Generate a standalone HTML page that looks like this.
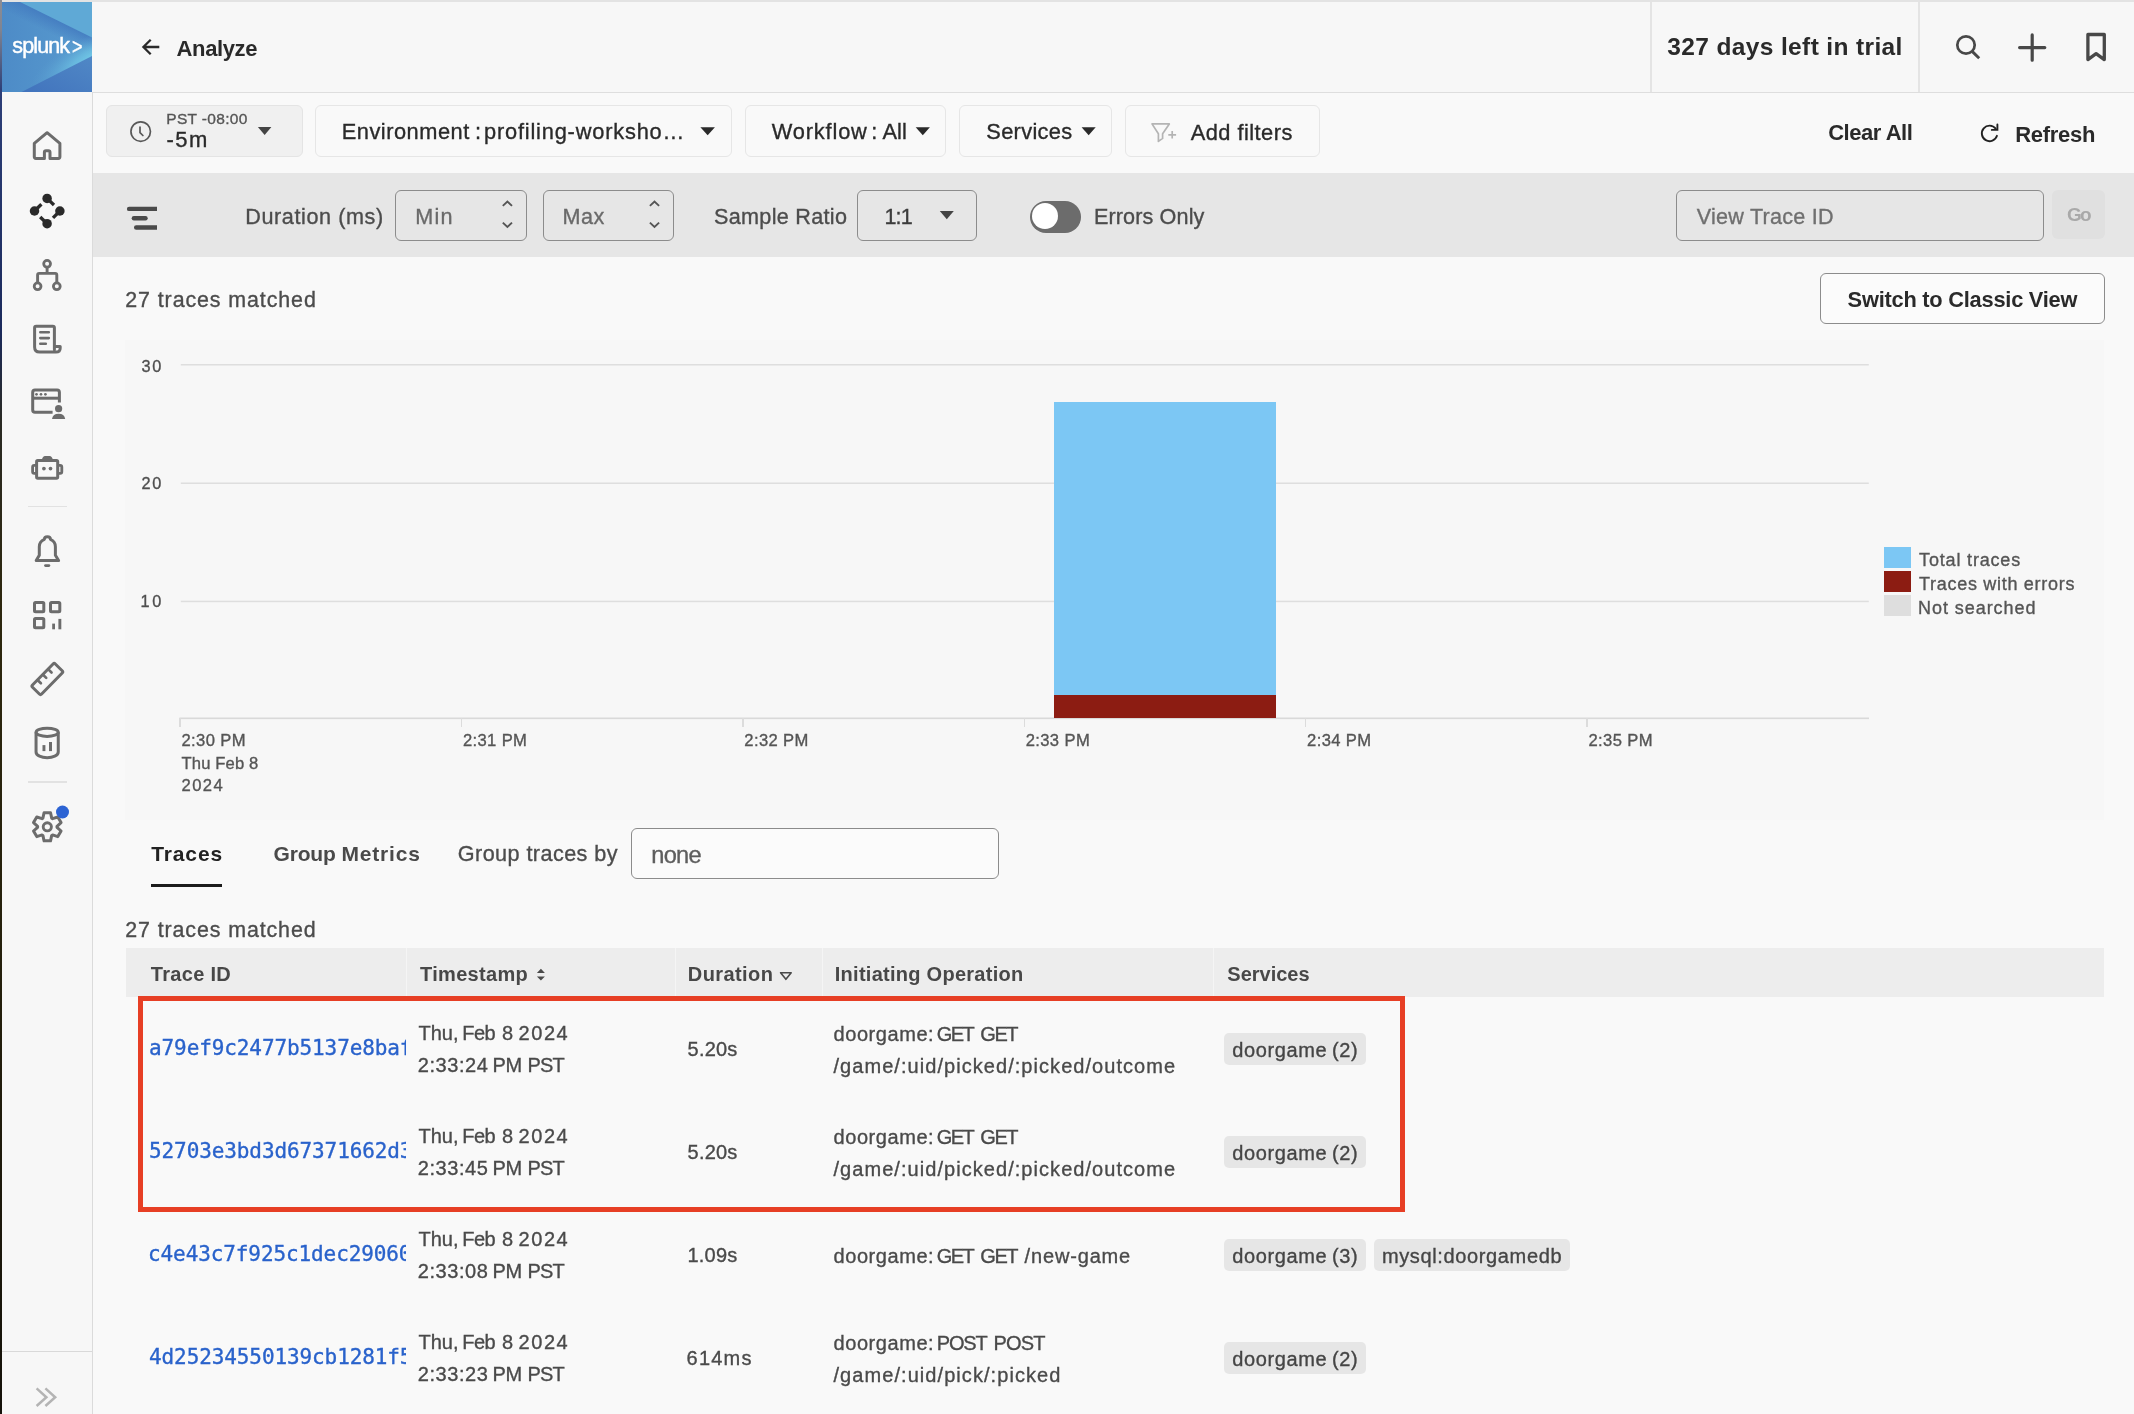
<!DOCTYPE html>
<html lang="en">
<head>
<meta charset="utf-8">
<title>Splunk Observability - Trace Analyzer</title>
<style>
html,body{margin:0;padding:0}
body{width:2134px;height:1414px;overflow:hidden;position:relative;background:#f9f9f9;font-family:"Liberation Sans",sans-serif;}
.a{position:absolute;box-sizing:border-box}
.t{position:absolute;white-space:nowrap;line-height:1;display:block}
.tag{position:absolute;background:#e6e6e6;border-radius:5px}
.btn{position:absolute;box-sizing:border-box;border:1.5px solid #e6e6e6;border-radius:6px;background:#f9f9f9}
.inp{position:absolute;box-sizing:border-box;border:1.5px solid #8c8c8c;border-radius:6px}
svg{position:absolute;overflow:visible}
</style>
</head>
<body>
<!-- window chrome strips -->
<div class="a" style="left:0;top:0;width:2134px;height:2px;background:#e3e3e3"></div>
<div class="a" style="left:0;top:0;width:2px;height:1414px;background:linear-gradient(#8c8d95 0px,#7f8492 30px,#2d3f78 90px,#1b2a5c 330px,#2a2a24 420px,#2e280f 600px,#241f0c 1000px,#15120a 1414px)"></div>

<!-- sidebar -->
<div class="a" style="left:2px;top:2px;width:90px;height:1412px;background:#f7f7f7"></div>
<div class="a" style="left:92px;top:92px;width:1px;height:1322px;background:#dbdbdb"></div>
<svg class="a" style="left:2px;top:2px" width="90" height="90" viewBox="0 0 90 90"><defs><linearGradient id="lg1" x1="0" y1="0" x2="1" y2="0"><stop offset="0" stop-color="#4d8bc7"/><stop offset="0.6" stop-color="#5495cc"/><stop offset="1" stop-color="#5a9ed1"/></linearGradient><linearGradient id="lg3" x1="0" y1="1" x2="1" y2="0"><stop offset="0" stop-color="#4173bd"/><stop offset="1" stop-color="#5088c6"/></linearGradient><radialGradient id="lg4" gradientUnits="userSpaceOnUse" cx="0" cy="0" r="70" gradientTransform="translate(92 55) rotate(-27) scale(1 0.32)"><stop offset="0" stop-color="#72cbe8" stop-opacity="1"/><stop offset="0.35" stop-color="#6cc0e2" stop-opacity="0.75"/><stop offset="1" stop-color="#5a9ed1" stop-opacity="0"/></radialGradient><linearGradient id="lg5" gradientUnits="userSpaceOnUse" x1="56" y1="18" x2="49" y2="32"><stop offset="0" stop-color="#4279bf" stop-opacity="0.85"/><stop offset="1" stop-color="#4279bf" stop-opacity="0"/></linearGradient></defs><rect width="90" height="90" fill="url(#lg1)"/><rect width="90" height="90" fill="url(#lg5)"/><rect width="90" height="90" fill="url(#lg4)"/><path d="M18 0 H90 V35.5 Z" fill="#5fa9d6"/><path d="M90 54 V90 H19.5 Z" fill="url(#lg3)"/></svg>
<svg class="a" style="left:0;top:0" width="2134" height="1414" viewBox="0 0 2134 1414" ><path fill="none" stroke="#6c6c6c" stroke-width="3" stroke-linejoin="round" stroke-linecap="round" d="M44.4 158.4 H36 Q34.3 158.4 34.3 156.8 V143.4 L47.1 132.7 L59.9 143.4 V156.8 Q59.9 158.4 58.3 158.4 H50 V152.4 Q50 150.8 48.4 150.8 H46 Q44.4 150.8 44.4 152.4 Z"/><circle cx="47.1" cy="198.4" r="4.75" fill="#2a2a2a"/><circle cx="34.5" cy="211" r="4.75" fill="#2a2a2a"/><circle cx="59.9" cy="211" r="4.75" fill="#2a2a2a"/><circle cx="47.1" cy="223.7" r="4.75" fill="#2a2a2a"/><line x1="47.1" y1="198.4" x2="54.0" y2="205.0" stroke="#2a2a2a" stroke-width="3.3"/><line x1="34.5" y1="211" x2="41.4" y2="204.3" stroke="#2a2a2a" stroke-width="3.3"/><line x1="59.9" y1="211" x2="53.0" y2="217.9" stroke="#2a2a2a" stroke-width="3.3"/><line x1="47.1" y1="223.7" x2="40.2" y2="217.0" stroke="#2a2a2a" stroke-width="3.3"/><circle cx="47.1" cy="263.8" r="3.4" fill="none" stroke="#6c6c6c" stroke-width="2.8"/><circle cx="37.6" cy="286.3" r="3.4" fill="none" stroke="#6c6c6c" stroke-width="2.8"/><circle cx="56.8" cy="286.3" r="3.4" fill="none" stroke="#6c6c6c" stroke-width="2.8"/><path fill="none" stroke="#6c6c6c" stroke-width="2.9" d="M47.1 267.5 V273.4 M37.6 282.6 V275 Q37.6 273.4 39.2 273.4 H55.2 Q56.8 273.4 56.8 275 V282.6"/><path fill="none" stroke="#6c6c6c" stroke-width="3" stroke-linejoin="round" stroke-linecap="round" d="M54.4 346.4 V327.8 Q54.4 326.2 52.8 326.2 H36.2 Q34.6 326.2 34.6 327.8 V347 Q34.6 352.1 39.7 352.1 H56 Q60.2 352.1 60.2 347.9 V346.4 H54.4 V349.5"/><path fill="none" stroke="#6c6c6c" stroke-width="2.6" stroke-linecap="round" d="M40.3 332.3 H48.8 M40.3 338.1 H48.8 M40.3 343.8 H45.8"/><path fill="none" stroke="#6c6c6c" stroke-width="3" stroke-linejoin="round" d="M59.4 402.6 V392.4 Q59.4 390.1 57.1 390.1 H35 Q32.7 390.1 32.7 392.4 V410 Q32.7 412.3 35 412.3 H52.6"/><path fill="none" stroke="#6c6c6c" stroke-width="3" d="M32.7 398.2 H59.4"/><circle cx="36.5" cy="394.3" r="1.35" fill="#6c6c6c"/><circle cx="41" cy="394.3" r="1.35" fill="#6c6c6c"/><circle cx="45.4" cy="394.3" r="1.35" fill="#6c6c6c"/><circle cx="58.6" cy="408.7" r="3.6" fill="#6c6c6c"/><path fill="#6c6c6c" d="M52 419.1 Q52.8 413.8 58.6 413.8 Q64.4 413.8 65.2 419.1 Z"/><rect x="36.6" y="460.5" width="21.1" height="17.8" rx="1.2" fill="none" stroke="#6c6c6c" stroke-width="3" stroke-linejoin="round" stroke-linecap="round"/><path fill="#6c6c6c" d="M41.9 459.5 Q42.8 455.9 45 455.9 H49.7 Q51.9 455.9 52.8 459.5 Z"/><path fill="none" stroke="#6c6c6c" stroke-width="2.8" stroke-linejoin="round" d="M36 465.4 H34.2 Q32.6 465.4 32.6 467 V471.7 Q32.6 473.3 34.2 473.3 H36 M58.3 465.4 H60.2 Q61.8 465.4 61.8 467 V471.7 Q61.8 473.3 60.2 473.3 H58.3"/><circle cx="43.9" cy="468.6" r="1.85" fill="#6c6c6c"/><circle cx="50.5" cy="468.6" r="1.85" fill="#6c6c6c"/><path fill="none" stroke="#6c6c6c" stroke-width="3" stroke-linejoin="round" stroke-linecap="round" d="M36.2 560.6 L39.3 555.2 V546.8 C39.3 542.2 42.6 540 44.4 539.3 C44.4 537.6 45.7 536.8 47.4 536.8 C49.1 536.8 50.4 537.6 50.4 539.3 C52.2 540 55.4 542.2 55.4 546.8 V555.2 L58.6 560.6 Z"/><path stroke="#6c6c6c" stroke-width="2.8" stroke-linecap="round" d="M45.5 565.6 H48.9"/><rect x="34.5" y="602.4" width="9.3" height="9.3" rx="1" fill="none" stroke="#6c6c6c" stroke-width="3" stroke-linejoin="round" stroke-linecap="round"/><rect x="50.5" y="602.4" width="9.3" height="9.3" rx="1" fill="none" stroke="#6c6c6c" stroke-width="3" stroke-linejoin="round" stroke-linecap="round"/><rect x="34.5" y="618.5" width="9.3" height="9.3" rx="1" fill="none" stroke="#6c6c6c" stroke-width="3" stroke-linejoin="round" stroke-linecap="round"/><rect x="52.2" y="623.6" width="2.8" height="5.7" fill="#6c6c6c"/><rect x="58.4" y="618.9" width="2.9" height="10.4" fill="#6c6c6c"/><g transform="translate(47.35 679) rotate(-45.6)"><rect x="-16.3" y="-6.4" width="32.6" height="12.8" rx="1.6" fill="none" stroke="#6c6c6c" stroke-width="3" stroke-linejoin="round" stroke-linecap="round"/><path stroke="#6c6c6c" stroke-width="2.7" stroke-linecap="round" d="M-7.6 -6 V-1.6 M0 -6 V-1.6 M7.6 -6 V-1.6"/></g><ellipse cx="47.15" cy="732.3" rx="11.1" ry="4.1" fill="none" stroke="#6c6c6c" stroke-width="3"/><path fill="none" stroke="#6c6c6c" stroke-width="3" d="M36.05 732.3 V752 C36.05 759.5 58.25 759.5 58.25 752 V732.3"/><rect x="42.5" y="745.1" width="2.9" height="6" fill="#6c6c6c"/><rect x="49" y="742" width="3" height="9.1" fill="#6c6c6c"/><path d="M51.70 818.16 L50.54 812.77 L44.06 812.77 L42.90 818.16 L42.02 818.66 L36.77 816.98 L33.53 822.59 L37.61 826.29 L37.61 827.31 L33.53 831.01 L36.77 836.62 L42.02 834.94 L42.90 835.44 L44.06 840.83 L50.54 840.83 L51.70 835.44 L52.58 834.94 L57.83 836.62 L61.07 831.01 L56.99 827.31 L56.99 826.29 L61.07 822.59 L57.83 816.98 L52.58 818.66 Z" fill="none" stroke="#6c6c6c" stroke-width="3" stroke-linejoin="round"/><circle cx="47.3" cy="826.8" r="4.1" fill="none" stroke="#6c6c6c" stroke-width="2.9"/><circle cx="62.5" cy="812" r="6.5" fill="#2c63d3"/><path fill="none" stroke="#b4b4b4" stroke-width="2.5" d="M36.6 1388.4 L46.4 1397.2 L36.6 1406 M45.4 1388.4 L55.2 1397.2 L45.4 1406"/></svg>
<div class="a" style="left:28px;top:505.5px;width:39px;height:1.5px;background:#e2e2e2"></div>
<div class="a" style="left:28px;top:781px;width:39px;height:1.5px;background:#e2e2e2"></div>
<div class="a" style="left:2px;top:1350.5px;width:90px;height:1.5px;background:#d9d9d9"></div>

<!-- header -->
<div class="a" style="left:92px;top:2px;width:2042px;height:90px;background:#f7f7f7"></div>
<div class="a" style="left:93px;top:92px;width:2041px;height:1px;background:#dedede"></div>
<div class="a" style="left:1650px;top:2px;width:1.5px;height:90px;background:#e4e4e4"></div>
<div class="a" style="left:1918px;top:2px;width:1.5px;height:90px;background:#e4e4e4"></div>
<svg class="a" style="left:0;top:0" width="2134" height="1414" viewBox="0 0 2134 1414" ><path fill="none" stroke="#2a2a2a" stroke-width="2.3" d="M159.3 47 H143.6 M150.7 39.7 L143.4 47 L150.7 54.3"/><circle cx="1966" cy="45" r="8.7" fill="none" stroke="#484848" stroke-width="2.7"/><path stroke="#484848" stroke-width="2.9" d="M1972.4 51.6 L1979.2 58.3"/><path stroke="#484848" stroke-width="3.2" stroke-linecap="round" d="M2019.6 47.6 H2044.8 M2032.2 34.9 V60.2"/><path fill="none" stroke="#484848" stroke-width="3.3" stroke-linejoin="round" d="M2087.9 34.5 H2104.3 V59.6 L2096.1 53.6 L2087.9 59.6 Z"/></svg>

<!-- filter row -->
<div class="btn" style="left:106px;top:105px;width:197px;height:52px;background:#f0f0f0;border-color:#e4e4e4"></div>
<div class="btn" style="left:315px;top:105px;width:417px;height:52px"></div>
<div class="btn" style="left:745px;top:105px;width:201px;height:52px"></div>
<div class="btn" style="left:959px;top:105px;width:153px;height:52px"></div>
<div class="btn" style="left:1125px;top:105px;width:195px;height:52px"></div>
<svg class="a" style="left:0;top:0" width="2134" height="1414" viewBox="0 0 2134 1414" ><circle cx="140.7" cy="131.6" r="9.75" fill="none" stroke="#585858" stroke-width="1.7"/><path fill="none" stroke="#585858" stroke-width="1.7" stroke-linecap="round" d="M140 127 V132.6 L142.9 135.5"/><path fill="#444" d="M257.9 127.1 H271.4 L264.65 135.1 Z"/><path fill="#2a2a2a" d="M700.4 127.3 H714.9 L707.65 135.3 Z"/><path fill="#2a2a2a" d="M915.7 127.3 H929.9 L922.8 135.3 Z"/><path fill="#2a2a2a" d="M1081.6 127.3 H1095.7 L1088.65 135.3 Z"/><path fill="none" stroke="#b4b4b4" stroke-width="1.7" stroke-linejoin="round" d="M1152 123.9 H1169.3 L1162.6 133.8 V138.4 L1158.4 141.4 V133.8 Z"/><path stroke="#b4b4b4" stroke-width="1.7" d="M1168.3 134.8 H1176.1 M1172.2 131 V138.6"/><path fill="none" stroke="#222" stroke-width="1.9" stroke-linecap="round" d="M1995.71 128.63 A7.75 7.75 0 1 0 1996.97 135.79"/><path fill="none" stroke="#222" stroke-width="1.9" stroke-linecap="round" stroke-linejoin="miter" d="M1997.4 124.4 V129.9 H1991.8"/></svg>

<!-- toolbar -->
<div class="a" style="left:93px;top:173px;width:2041px;height:83.5px;background:#e6e6e6"></div>
<div class="inp" style="left:395px;top:190px;width:132px;height:50.5px"></div>
<div class="inp" style="left:543px;top:190px;width:130.5px;height:50.5px"></div>
<div class="inp" style="left:857px;top:190px;width:120px;height:50.5px"></div>
<div class="a" style="left:1030px;top:201px;width:51px;height:32px;border-radius:16px;background:#6c6c6c"></div>
<div class="a" style="left:1031.8px;top:202.8px;width:26.4px;height:26.4px;border-radius:50%;background:#fff"></div>
<div class="inp" style="left:1676px;top:190px;width:368px;height:50.5px"></div>
<div class="a" style="left:2052px;top:190px;width:53px;height:49px;border-radius:6px;background:#e0e0e0"></div>
<svg class="a" style="left:0;top:0" width="2134" height="1414" viewBox="0 0 2134 1414" ><path fill="#4a4a4a" d="M129.1 206.7 H157 V211.1 H129.1 A2.2 2.2 0 0 1 129.1 206.7 Z"/><rect x="131.7" y="216.1" width="16" height="4.4" rx="2.2" fill="#4a4a4a"/><path fill="#4a4a4a" d="M136.2 225.3 H157 V229.8 H136.2 A2.25 2.25 0 0 1 136.2 225.3 Z"/><path fill="none" stroke="#555" stroke-width="1.9" d="M502.79999999999995 205.9 L507.4 201.6 L512.0 205.9 M502.79999999999995 222.6 L507.4 226.9 L512.0 222.6"/><path fill="none" stroke="#555" stroke-width="1.9" d="M649.9 205.9 L654.5 201.6 L659.1 205.9 M649.9 222.6 L654.5 226.9 L659.1 222.6"/><path fill="#444" d="M939.8 211.1 H953.8 L946.8 219.2 Z"/></svg>

<!-- classic view -->
<div class="inp" style="left:1820px;top:273px;width:285px;height:51px;background:#fbfbfb"></div>

<!-- chart -->
<div class="a" style="left:125px;top:339.5px;width:1979px;height:480px;background:#f7f7f7"></div>
<svg class="a" style="left:0;top:0" width="2134" height="1414" viewBox="0 0 2134 1414"><rect x="180.8" y="364" width="1688" height="1.5" fill="#dedede"/><rect x="180.8" y="482.5" width="1688" height="1.5" fill="#dedede"/><rect x="180.8" y="600.7" width="1688" height="1.5" fill="#dedede"/><rect x="179.4" y="717.5" width="1689.6" height="1.6" fill="#d9d9d9"/></svg>
<div class="a" style="left:1054px;top:401.5px;width:222px;height:293.5px;background:#7cc7f4"></div>
<div class="a" style="left:1054px;top:694.7px;width:222px;height:23px;background:#8c1c12"></div>
<div class="a" style="left:179.3px;top:718px;width:1.6px;height:8.6px;background:#dcdcdc"></div><div class="a" style="left:460.7px;top:718px;width:1.6px;height:8.6px;background:#dcdcdc"></div><div class="a" style="left:742.1px;top:718px;width:1.6px;height:8.6px;background:#dcdcdc"></div><div class="a" style="left:1023.5px;top:718px;width:1.6px;height:8.6px;background:#dcdcdc"></div><div class="a" style="left:1304.9px;top:718px;width:1.6px;height:8.6px;background:#dcdcdc"></div><div class="a" style="left:1586.3px;top:718px;width:1.6px;height:8.6px;background:#dcdcdc"></div>
<div class="a" style="left:1884px;top:547px;width:27.4px;height:21px;background:#7cc7f4"></div>
<div class="a" style="left:1884px;top:571px;width:27.4px;height:21px;background:#8c1c12"></div>
<div class="a" style="left:1884px;top:595px;width:27.4px;height:21px;background:#dedede"></div>

<!-- tabs -->
<div class="a" style="left:151px;top:883.5px;width:71px;height:3px;background:#1c1c1c"></div>
<div class="inp" style="left:631px;top:828px;width:368px;height:50.5px;background:#fbfbfb"></div>

<!-- table -->
<div class="a" style="left:126px;top:947.7px;width:1978px;height:49.5px;background:#ededed"></div>
<div class="a" style="left:405.5px;top:948px;width:1.6px;height:49px;background:#f5f5f5"></div>
<div class="a" style="left:674.5px;top:948px;width:1.6px;height:49px;background:#f5f5f5"></div>
<div class="a" style="left:821.5px;top:948px;width:1.6px;height:49px;background:#f5f5f5"></div>
<div class="a" style="left:1212.5px;top:948px;width:1.6px;height:49px;background:#f5f5f5"></div>
<svg class="a" style="left:0;top:0" width="2134" height="1414" viewBox="0 0 2134 1414" ><path fill="#4a4a4a" d="M536.9 972.9 L540.9 968.7 L544.9 972.9 Z M536.9 976.4 L540.9 980.6 L544.9 976.4 Z"/><path fill="none" stroke="#4a4a4a" stroke-width="1.6" stroke-linejoin="round" d="M780.6 972.7 H791.2 L785.9 979.3 Z"/></svg>
<div class="tag" style="left:1224.0px;top:1032.9px;width:141.9px;height:31.9px"></div>
<div class="tag" style="left:1224.0px;top:1135.9px;width:141.9px;height:31.9px"></div>
<div class="tag" style="left:1224.0px;top:1238.9px;width:141.9px;height:31.9px"></div>
<div class="tag" style="left:1374.0px;top:1238.9px;width:195.9px;height:31.9px"></div>
<div class="tag" style="left:1224.0px;top:1341.9px;width:141.9px;height:31.9px"></div>
<!-- highlight -->
<div class="a" style="left:137.6px;top:996.4px;width:1267.8px;height:215.2px;border:5.2px solid #e73f25"></div>

<div class="a" style="left:0;top:0;width:2134px;height:1414px;will-change:transform">
<span class="t" style='left:12.30px;top:36px;font-size:21.5px;font-weight:400;color:#ffffff;letter-spacing:-0.880px;-webkit-text-stroke:0.45px #fff;'>splunk</span>
<span class="t" style='left:72.00px;top:36px;font-size:22.5px;font-weight:400;color:#ffffff;letter-spacing:-3.000px;transform:scaleX(0.8);transform-origin:0 0;-webkit-text-stroke:0.4px #fff;'>&gt;</span>
<span class="t" style='left:176.60px;top:38px;font-size:22px;font-weight:700;color:#2a2a2a;letter-spacing:-0.385px;'>Analyze</span>
<span class="t" style='left:1667.30px;top:35px;font-size:24.5px;font-weight:700;color:#2a2a2a;letter-spacing:0.367px;'>327 days left in trial</span>
<span class="t" style='left:166.30px;top:111px;font-size:15.5px;font-weight:400;color:#555;letter-spacing:0.324px;-webkit-text-stroke:0.35px #555;'>PST -08:00</span>
<span class="t" style='left:166.50px;top:129px;font-size:22px;font-weight:400;color:#2a2a2a;letter-spacing:1.469px;-webkit-text-stroke:0.35px #2a2a2a;'>-5m</span>
<span class="t" style='left:341.70px;top:121px;font-size:21.8px;font-weight:400;color:#2a2a2a;letter-spacing:0.519px;-webkit-text-stroke:0.35px #2a2a2a;'>Environment </span>
<span class="t" style='left:474.90px;top:121px;font-size:21.8px;font-weight:400;color:#2a2a2a;letter-spacing:-0.900px;-webkit-text-stroke:0.35px #2a2a2a;'>: </span>
<span class="t" style='left:484.00px;top:121px;font-size:21.8px;font-weight:400;color:#2a2a2a;letter-spacing:0.809px;-webkit-text-stroke:0.35px #2a2a2a;'>profiling-worksho…</span>
<span class="t" style='left:771.80px;top:121px;font-size:21.8px;font-weight:400;color:#2a2a2a;letter-spacing:0.832px;-webkit-text-stroke:0.35px #2a2a2a;'>Workflow </span>
<span class="t" style='left:871.30px;top:121px;font-size:21.8px;font-weight:400;color:#2a2a2a;letter-spacing:-0.900px;-webkit-text-stroke:0.35px #2a2a2a;'>: </span>
<span class="t" style='left:882.50px;top:121px;font-size:21.8px;font-weight:400;color:#2a2a2a;letter-spacing:0.010px;-webkit-text-stroke:0.35px #2a2a2a;'>All</span>
<span class="t" style='left:986.30px;top:121px;font-size:21.8px;font-weight:400;color:#2a2a2a;letter-spacing:0.331px;-webkit-text-stroke:0.35px #2a2a2a;'>Services</span>
<span class="t" style='left:1190.70px;top:122px;font-size:21.8px;font-weight:400;color:#2a2a2a;letter-spacing:0.468px;-webkit-text-stroke:0.35px #2a2a2a;'>Add filters</span>
<span class="t" style='left:1828.20px;top:122px;font-size:22px;font-weight:700;color:#2a2a2a;letter-spacing:-0.481px;'>Clear All</span>
<span class="t" style='left:2015.20px;top:124px;font-size:22px;font-weight:700;color:#2a2a2a;letter-spacing:-0.297px;'>Refresh</span>
<span class="t" style='left:245.20px;top:206px;font-size:21.6px;font-weight:400;color:#4c4c4c;letter-spacing:0.600px;-webkit-text-stroke:0.35px #4c4c4c;'>Duration (ms)</span>
<span class="t" style='left:415.30px;top:206px;font-size:21.6px;font-weight:400;color:#6a6a6a;letter-spacing:1.207px;-webkit-text-stroke:0.35px #6a6a6a;'>Min</span>
<span class="t" style='left:562.60px;top:206px;font-size:21.6px;font-weight:400;color:#6a6a6a;letter-spacing:0.501px;-webkit-text-stroke:0.35px #6a6a6a;'>Max</span>
<span class="t" style='left:714.10px;top:206px;font-size:21.6px;font-weight:400;color:#4c4c4c;letter-spacing:0.289px;-webkit-text-stroke:0.35px #4c4c4c;'>Sample Ratio</span>
<span class="t" style='left:884.50px;top:206px;font-size:21.6px;font-weight:400;color:#3c3c3c;letter-spacing:-0.904px;-webkit-text-stroke:0.35px #3c3c3c;'>1:1</span>
<span class="t" style='left:1093.90px;top:206px;font-size:21.6px;font-weight:400;color:#4c4c4c;letter-spacing:0.132px;-webkit-text-stroke:0.35px #4c4c4c;'>Errors Only</span>
<span class="t" style='left:1696.70px;top:206px;font-size:21.6px;font-weight:400;color:#6f6f6f;letter-spacing:0.233px;-webkit-text-stroke:0.35px #6f6f6f;'>View Trace ID</span>
<span class="t" style='left:2067.00px;top:205px;font-size:19px;font-weight:700;color:#a9a9a9;letter-spacing:-1.779px;'>Go</span>
<span class="t" style='left:125.30px;top:290px;font-size:21.4px;font-weight:400;color:#4c4c4c;letter-spacing:0.908px;-webkit-text-stroke:0.35px #4c4c4c;'>27 traces matched</span>
<span class="t" style='left:1847.60px;top:289px;font-size:21.8px;font-weight:700;color:#2a2a2a;letter-spacing:-0.226px;'>Switch to Classic View</span>
<span class="t" style='left:141.50px;top:358px;font-size:16.3px;font-weight:400;color:#4f4f4f;letter-spacing:1.645px;-webkit-text-stroke:0.35px #4f4f4f;'>30</span>
<span class="t" style='left:141.50px;top:475px;font-size:16.3px;font-weight:400;color:#4f4f4f;letter-spacing:1.645px;-webkit-text-stroke:0.35px #4f4f4f;'>20</span>
<span class="t" style='left:140.50px;top:593px;font-size:16.3px;font-weight:400;color:#4f4f4f;letter-spacing:2.645px;-webkit-text-stroke:0.35px #4f4f4f;'>10</span>
<span class="t" style='left:181.50px;top:733px;font-size:16.6px;font-weight:400;color:#555;letter-spacing:0.371px;-webkit-text-stroke:0.35px #555;'>2:30 PM</span>
<span class="t" style='left:462.90px;top:733px;font-size:16.6px;font-weight:400;color:#555;letter-spacing:0.371px;-webkit-text-stroke:0.35px #555;'>2:31 PM</span>
<span class="t" style='left:744.30px;top:733px;font-size:16.6px;font-weight:400;color:#555;letter-spacing:0.371px;-webkit-text-stroke:0.35px #555;'>2:32 PM</span>
<span class="t" style='left:1025.70px;top:733px;font-size:16.6px;font-weight:400;color:#555;letter-spacing:0.371px;-webkit-text-stroke:0.35px #555;'>2:33 PM</span>
<span class="t" style='left:1307.10px;top:733px;font-size:16.6px;font-weight:400;color:#555;letter-spacing:0.371px;-webkit-text-stroke:0.35px #555;'>2:34 PM</span>
<span class="t" style='left:1588.50px;top:733px;font-size:16.6px;font-weight:400;color:#555;letter-spacing:0.371px;-webkit-text-stroke:0.35px #555;'>2:35 PM</span>
<span class="t" style='left:181.60px;top:756px;font-size:16.6px;font-weight:400;color:#555;letter-spacing:0.137px;-webkit-text-stroke:0.35px #555;'>Thu Feb 8</span>
<span class="t" style='left:181.60px;top:778px;font-size:16.6px;font-weight:400;color:#555;letter-spacing:1.405px;-webkit-text-stroke:0.35px #555;'>2024</span>
<span class="t" style='left:1919.10px;top:551px;font-size:18px;font-weight:400;color:#555;letter-spacing:0.824px;-webkit-text-stroke:0.35px #555;'>Total traces</span>
<span class="t" style='left:1919.10px;top:575px;font-size:18px;font-weight:400;color:#555;letter-spacing:0.702px;-webkit-text-stroke:0.35px #555;'>Traces with errors</span>
<span class="t" style='left:1918.10px;top:599px;font-size:18px;font-weight:400;color:#555;letter-spacing:0.932px;-webkit-text-stroke:0.35px #555;'>Not searched</span>
<span class="t" style='left:151.20px;top:843px;font-size:21px;font-weight:700;color:#222;letter-spacing:0.884px;'>Traces</span>
<span class="t" style='left:273.60px;top:843px;font-size:21px;font-weight:700;color:#4a4a4a;letter-spacing:-0.216px;'>Group </span>
<span class="t" style='left:341.40px;top:843px;font-size:21px;font-weight:700;color:#4a4a4a;letter-spacing:0.841px;'>Metrics</span>
<span class="t" style='left:457.80px;top:843px;font-size:21.6px;font-weight:400;color:#4c4c4c;letter-spacing:0.434px;-webkit-text-stroke:0.35px #4c4c4c;'>Group traces by</span>
<span class="t" style='left:651.30px;top:844px;font-size:23.6px;font-weight:400;color:#5e5e5e;letter-spacing:-0.722px;-webkit-text-stroke:0.35px #5e5e5e;'>none</span>
<span class="t" style='left:125.30px;top:920px;font-size:21.4px;font-weight:400;color:#4c4c4c;letter-spacing:0.895px;-webkit-text-stroke:0.35px #4c4c4c;'>27 traces matched</span>
<span class="t" style='left:150.80px;top:964px;font-size:20px;font-weight:700;color:#484848;letter-spacing:0.303px;'>Trace ID</span>
<span class="t" style='left:420.10px;top:964px;font-size:20px;font-weight:700;color:#484848;letter-spacing:0.299px;'>Timestamp</span>
<span class="t" style='left:687.80px;top:964px;font-size:20px;font-weight:700;color:#484848;letter-spacing:0.414px;'>Duration</span>
<span class="t" style='left:834.80px;top:964px;font-size:20px;font-weight:700;color:#484848;letter-spacing:0.268px;'>Initiating Operation</span>
<span class="t" style='left:1227.30px;top:964px;font-size:20px;font-weight:700;color:#484848;letter-spacing:0.004px;'>Services</span>
<span class="t" style='left:149.00px;top:1038px;font-size:21px;font-weight:400;color:#2962cb;letter-spacing:-0.100px;font-family:"DejaVu Sans Mono", "Liberation Mono", monospace;width:257.20px;overflow:hidden;-webkit-text-stroke:0.35px #2962cb;'>a79ef9c2477b5137e8baf1</span>
<span class="t" style='left:418.40px;top:1023px;font-size:20px;font-weight:400;color:#4a4a4a;letter-spacing:0.046px;-webkit-text-stroke:0.35px #4a4a4a;'>Thu, </span>
<span class="t" style='left:462.20px;top:1023px;font-size:20px;font-weight:400;color:#4a4a4a;letter-spacing:-0.470px;-webkit-text-stroke:0.35px #4a4a4a;'>Feb </span>
<span class="t" style='left:502.00px;top:1023px;font-size:20px;font-weight:400;color:#4a4a4a;letter-spacing:-0.200px;-webkit-text-stroke:0.35px #4a4a4a;'>8 </span>
<span class="t" style='left:518.50px;top:1023px;font-size:20px;font-weight:400;color:#4a4a4a;letter-spacing:1.577px;-webkit-text-stroke:0.35px #4a4a4a;'>2024</span>
<span class="t" style='left:417.80px;top:1055px;font-size:20px;font-weight:400;color:#4a4a4a;letter-spacing:0.549px;-webkit-text-stroke:0.35px #4a4a4a;'>2:33:24 </span>
<span class="t" style='left:492.60px;top:1055px;font-size:20px;font-weight:400;color:#4a4a4a;letter-spacing:-0.440px;-webkit-text-stroke:0.35px #4a4a4a;'>PM </span>
<span class="t" style='left:527.50px;top:1055px;font-size:20px;font-weight:400;color:#4a4a4a;letter-spacing:-0.840px;-webkit-text-stroke:0.35px #4a4a4a;'>PST</span>
<span class="t" style='left:687.60px;top:1039px;font-size:20px;font-weight:400;color:#4a4a4a;letter-spacing:0.194px;-webkit-text-stroke:0.35px #4a4a4a;'>5.20s</span>
<span class="t" style='left:833.50px;top:1024px;font-size:20px;font-weight:400;color:#4a4a4a;letter-spacing:0.568px;-webkit-text-stroke:0.35px #4a4a4a;'>doorgame: </span>
<span class="t" style='left:936.80px;top:1024px;font-size:20px;font-weight:400;color:#4a4a4a;letter-spacing:-1.598px;-webkit-text-stroke:0.35px #4a4a4a;'>GET </span>
<span class="t" style='left:980.30px;top:1024px;font-size:20px;font-weight:400;color:#4a4a4a;letter-spacing:-1.448px;-webkit-text-stroke:0.35px #4a4a4a;'>GET</span>
<span class="t" style='left:833.50px;top:1056px;font-size:20px;font-weight:400;color:#4a4a4a;letter-spacing:1.052px;-webkit-text-stroke:0.35px #4a4a4a;'>/game/:uid/picked/:picked/outcome</span>
<span class="t" style='left:1232.30px;top:1040px;font-size:20px;font-weight:400;color:#454545;letter-spacing:0.609px;-webkit-text-stroke:0.35px #454545;'>doorgame </span>
<span class="t" style='left:1332.10px;top:1040px;font-size:20px;font-weight:400;color:#454545;letter-spacing:0.558px;-webkit-text-stroke:0.35px #454545;'>(2)</span>
<span class="t" style='left:149.00px;top:1141px;font-size:21px;font-weight:400;color:#2962cb;letter-spacing:-0.100px;font-family:"DejaVu Sans Mono", "Liberation Mono", monospace;width:257.20px;overflow:hidden;-webkit-text-stroke:0.35px #2962cb;'>52703e3bd3d67371662d35</span>
<span class="t" style='left:418.40px;top:1126px;font-size:20px;font-weight:400;color:#4a4a4a;letter-spacing:0.046px;-webkit-text-stroke:0.35px #4a4a4a;'>Thu, </span>
<span class="t" style='left:462.20px;top:1126px;font-size:20px;font-weight:400;color:#4a4a4a;letter-spacing:-0.470px;-webkit-text-stroke:0.35px #4a4a4a;'>Feb </span>
<span class="t" style='left:502.00px;top:1126px;font-size:20px;font-weight:400;color:#4a4a4a;letter-spacing:-0.200px;-webkit-text-stroke:0.35px #4a4a4a;'>8 </span>
<span class="t" style='left:518.50px;top:1126px;font-size:20px;font-weight:400;color:#4a4a4a;letter-spacing:1.577px;-webkit-text-stroke:0.35px #4a4a4a;'>2024</span>
<span class="t" style='left:417.80px;top:1158px;font-size:20px;font-weight:400;color:#4a4a4a;letter-spacing:0.549px;-webkit-text-stroke:0.35px #4a4a4a;'>2:33:45 </span>
<span class="t" style='left:492.60px;top:1158px;font-size:20px;font-weight:400;color:#4a4a4a;letter-spacing:-0.440px;-webkit-text-stroke:0.35px #4a4a4a;'>PM </span>
<span class="t" style='left:527.50px;top:1158px;font-size:20px;font-weight:400;color:#4a4a4a;letter-spacing:-0.840px;-webkit-text-stroke:0.35px #4a4a4a;'>PST</span>
<span class="t" style='left:687.60px;top:1142px;font-size:20px;font-weight:400;color:#4a4a4a;letter-spacing:0.194px;-webkit-text-stroke:0.35px #4a4a4a;'>5.20s</span>
<span class="t" style='left:833.50px;top:1127px;font-size:20px;font-weight:400;color:#4a4a4a;letter-spacing:0.568px;-webkit-text-stroke:0.35px #4a4a4a;'>doorgame: </span>
<span class="t" style='left:936.80px;top:1127px;font-size:20px;font-weight:400;color:#4a4a4a;letter-spacing:-1.598px;-webkit-text-stroke:0.35px #4a4a4a;'>GET </span>
<span class="t" style='left:980.30px;top:1127px;font-size:20px;font-weight:400;color:#4a4a4a;letter-spacing:-1.448px;-webkit-text-stroke:0.35px #4a4a4a;'>GET</span>
<span class="t" style='left:833.50px;top:1159px;font-size:20px;font-weight:400;color:#4a4a4a;letter-spacing:1.052px;-webkit-text-stroke:0.35px #4a4a4a;'>/game/:uid/picked/:picked/outcome</span>
<span class="t" style='left:1232.30px;top:1143px;font-size:20px;font-weight:400;color:#454545;letter-spacing:0.609px;-webkit-text-stroke:0.35px #454545;'>doorgame </span>
<span class="t" style='left:1332.10px;top:1143px;font-size:20px;font-weight:400;color:#454545;letter-spacing:0.558px;-webkit-text-stroke:0.35px #454545;'>(2)</span>
<span class="t" style='left:148.00px;top:1244px;font-size:21px;font-weight:400;color:#2962cb;letter-spacing:-0.100px;font-family:"DejaVu Sans Mono", "Liberation Mono", monospace;width:258.20px;overflow:hidden;-webkit-text-stroke:0.35px #2962cb;'>c4e43c7f925c1dec29060a</span>
<span class="t" style='left:418.40px;top:1229px;font-size:20px;font-weight:400;color:#4a4a4a;letter-spacing:0.046px;-webkit-text-stroke:0.35px #4a4a4a;'>Thu, </span>
<span class="t" style='left:462.20px;top:1229px;font-size:20px;font-weight:400;color:#4a4a4a;letter-spacing:-0.470px;-webkit-text-stroke:0.35px #4a4a4a;'>Feb </span>
<span class="t" style='left:502.00px;top:1229px;font-size:20px;font-weight:400;color:#4a4a4a;letter-spacing:-0.200px;-webkit-text-stroke:0.35px #4a4a4a;'>8 </span>
<span class="t" style='left:518.50px;top:1229px;font-size:20px;font-weight:400;color:#4a4a4a;letter-spacing:1.577px;-webkit-text-stroke:0.35px #4a4a4a;'>2024</span>
<span class="t" style='left:417.80px;top:1261px;font-size:20px;font-weight:400;color:#4a4a4a;letter-spacing:0.549px;-webkit-text-stroke:0.35px #4a4a4a;'>2:33:08 </span>
<span class="t" style='left:492.60px;top:1261px;font-size:20px;font-weight:400;color:#4a4a4a;letter-spacing:-0.440px;-webkit-text-stroke:0.35px #4a4a4a;'>PM </span>
<span class="t" style='left:527.50px;top:1261px;font-size:20px;font-weight:400;color:#4a4a4a;letter-spacing:-0.840px;-webkit-text-stroke:0.35px #4a4a4a;'>PST</span>
<span class="t" style='left:687.40px;top:1245px;font-size:20px;font-weight:400;color:#4a4a4a;letter-spacing:0.244px;-webkit-text-stroke:0.35px #4a4a4a;'>1.09s</span>
<span class="t" style='left:833.50px;top:1246px;font-size:20px;font-weight:400;color:#4a4a4a;letter-spacing:0.568px;-webkit-text-stroke:0.35px #4a4a4a;'>doorgame: </span>
<span class="t" style='left:936.80px;top:1246px;font-size:20px;font-weight:400;color:#4a4a4a;letter-spacing:-1.598px;-webkit-text-stroke:0.35px #4a4a4a;'>GET </span>
<span class="t" style='left:980.30px;top:1246px;font-size:20px;font-weight:400;color:#4a4a4a;letter-spacing:-1.448px;-webkit-text-stroke:0.35px #4a4a4a;'>GET </span>
<span class="t" style='left:1024.60px;top:1246px;font-size:20px;font-weight:400;color:#4a4a4a;letter-spacing:0.836px;-webkit-text-stroke:0.35px #4a4a4a;'>/new-game</span>
<span class="t" style='left:1232.30px;top:1246px;font-size:20px;font-weight:400;color:#454545;letter-spacing:0.609px;-webkit-text-stroke:0.35px #454545;'>doorgame </span>
<span class="t" style='left:1332.10px;top:1246px;font-size:20px;font-weight:400;color:#454545;letter-spacing:0.558px;-webkit-text-stroke:0.35px #454545;'>(3)</span>
<span class="t" style='left:1381.90px;top:1246px;font-size:20px;font-weight:400;color:#454545;letter-spacing:0.636px;-webkit-text-stroke:0.35px #454545;'>mysql:doorgamedb</span>
<span class="t" style='left:149.00px;top:1347px;font-size:21px;font-weight:400;color:#2962cb;letter-spacing:-0.100px;font-family:"DejaVu Sans Mono", "Liberation Mono", monospace;width:257.20px;overflow:hidden;-webkit-text-stroke:0.35px #2962cb;'>4d25234550139cb1281f5e</span>
<span class="t" style='left:418.40px;top:1332px;font-size:20px;font-weight:400;color:#4a4a4a;letter-spacing:0.046px;-webkit-text-stroke:0.35px #4a4a4a;'>Thu, </span>
<span class="t" style='left:462.20px;top:1332px;font-size:20px;font-weight:400;color:#4a4a4a;letter-spacing:-0.470px;-webkit-text-stroke:0.35px #4a4a4a;'>Feb </span>
<span class="t" style='left:502.00px;top:1332px;font-size:20px;font-weight:400;color:#4a4a4a;letter-spacing:-0.200px;-webkit-text-stroke:0.35px #4a4a4a;'>8 </span>
<span class="t" style='left:518.50px;top:1332px;font-size:20px;font-weight:400;color:#4a4a4a;letter-spacing:1.577px;-webkit-text-stroke:0.35px #4a4a4a;'>2024</span>
<span class="t" style='left:417.80px;top:1364px;font-size:20px;font-weight:400;color:#4a4a4a;letter-spacing:0.549px;-webkit-text-stroke:0.35px #4a4a4a;'>2:33:23 </span>
<span class="t" style='left:492.60px;top:1364px;font-size:20px;font-weight:400;color:#4a4a4a;letter-spacing:-0.440px;-webkit-text-stroke:0.35px #4a4a4a;'>PM </span>
<span class="t" style='left:527.50px;top:1364px;font-size:20px;font-weight:400;color:#4a4a4a;letter-spacing:-0.840px;-webkit-text-stroke:0.35px #4a4a4a;'>PST</span>
<span class="t" style='left:686.60px;top:1348px;font-size:20px;font-weight:400;color:#4a4a4a;letter-spacing:1.193px;-webkit-text-stroke:0.35px #4a4a4a;'>614ms</span>
<span class="t" style='left:833.50px;top:1333px;font-size:20px;font-weight:400;color:#4a4a4a;letter-spacing:0.568px;-webkit-text-stroke:0.35px #4a4a4a;'>doorgame: </span>
<span class="t" style='left:936.80px;top:1333px;font-size:20px;font-weight:400;color:#4a4a4a;letter-spacing:-1.179px;-webkit-text-stroke:0.35px #4a4a4a;'>POST </span>
<span class="t" style='left:993.60px;top:1333px;font-size:20px;font-weight:400;color:#4a4a4a;letter-spacing:-0.879px;-webkit-text-stroke:0.35px #4a4a4a;'>POST</span>
<span class="t" style='left:833.50px;top:1365px;font-size:20px;font-weight:400;color:#4a4a4a;letter-spacing:1.063px;-webkit-text-stroke:0.35px #4a4a4a;'>/game/:uid/pick/:picked</span>
<span class="t" style='left:1232.30px;top:1349px;font-size:20px;font-weight:400;color:#454545;letter-spacing:0.609px;-webkit-text-stroke:0.35px #454545;'>doorgame </span>
<span class="t" style='left:1332.10px;top:1349px;font-size:20px;font-weight:400;color:#454545;letter-spacing:0.558px;-webkit-text-stroke:0.35px #454545;'>(2)</span>
</div>
</body>
</html>
